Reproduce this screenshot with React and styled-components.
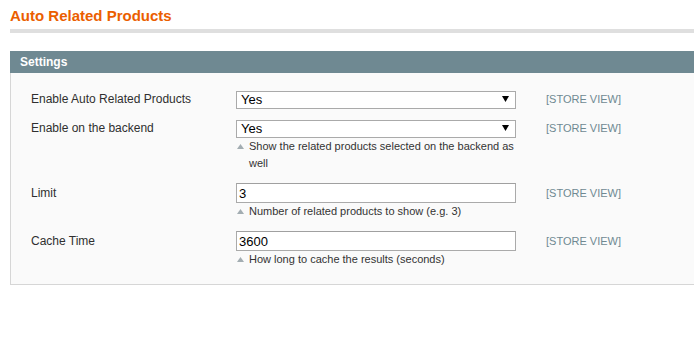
import React from "react";
import styled, { createGlobalStyle } from "styled-components";

const GlobalStyle = createGlobalStyle`
  html, body {
    margin: 0;
    background: #ffffff;
  }
  body {
    font-family: "Liberation Sans", Arial, Helvetica, sans-serif;
    color: #2f2f2f;
  }
`;

const Page = styled.div`
  padding: 7px 0 0 10px;
`;

const PageTitle = styled.h3`
  margin: 0;
  padding-bottom: 4px;
  border-bottom: 4px solid #dfdfdf;
  color: #eb5e00;
  font-size: 15px;
  line-height: 18px;
  font-weight: bold;
`;

const Section = styled.section`
  margin-top: 18px;
`;

const SectionHeader = styled.div`
  height: 22px;
  padding-left: 10px;
  background: #6f8992;
  color: #ffffff;
  font-size: 12px;
  font-weight: bold;
  line-height: 22px;
`;

const SectionBody = styled.div`
  background: #fafafa;
  border: 1px solid #d6d6d6;
  border-top: none;
  border-right: none;
  padding: 17px 0 16px 20px;
`;

const Row = styled.div`
  display: flex;
  align-items: flex-start;
  margin-bottom: 11px;

  &:last-child {
    margin-bottom: 0;
  }
`;

const Label = styled.div`
  flex: none;
  width: 205px;
  font-size: 12px;
  line-height: ${props => props.$h}px;
`;

const Value = styled.div`
  flex: none;
  width: 280px;
`;

const Scope = styled.div`
  margin-left: 30px;
  font-size: 11px;
  color: #6f8992;
  text-transform: uppercase;
  line-height: ${props => props.$h}px;
`;

const SelectWrap = styled.div`
  position: relative;
  width: 280px;
  height: 18px;
`;

const Select = styled.select`
  appearance: none;
  box-sizing: border-box;
  width: 100%;
  height: 18px;
  margin: 0;
  padding: 0 0 0 4px;
  border: 1px solid #aaaaaa;
  border-radius: 0;
  background: #ffffff;
  color: #000000;
  font-family: "Liberation Sans", Arial, sans-serif;
  font-size: 13px;
  line-height: 16px;
  outline: none;
`;

const SelectArrow = styled.svg`
  position: absolute;
  right: 7px;
  top: 6px;
  pointer-events: none;
`;

const TextInput = styled.input`
  box-sizing: border-box;
  display: block;
  width: 280px;
  height: 20px;
  margin: 0;
  padding: 0 2px;
  border: 1px solid #aaaaaa;
  border-top-color: #a0a0a0;
  background: #ffffff;
  color: #000000;
  font-family: "Liberation Sans", Arial, sans-serif;
  font-size: 13px;
  outline: none;
`;

const Note = styled.div`
  display: flex;
  align-items: flex-start;
  margin-top: ${props => props.$top}px;
  font-size: 11px;
  line-height: 17px;
  color: #333333;
`;

const NoteIcon = styled.svg`
  flex: none;
  margin: 6px 5px 0 1px;
`;

function Dropdown({ value }) {
  return (
    <SelectWrap>
      <Select defaultValue={value}>
        <option value="Yes">Yes</option>
        <option value="No">No</option>
      </Select>
      <SelectArrow width="7" height="6" viewBox="0 0 7 6">
        <polygon points="0,0 7,0 3.5,6" fill="#000" />
      </SelectArrow>
    </SelectWrap>
  );
}

function Hint({ top, children }) {
  return (
    <Note $top={top}>
      <NoteIcon width="7" height="5" viewBox="0 0 7 5">
        <polygon points="3.5,0 7,5 0,5" fill="#a3adb2" />
      </NoteIcon>
      <span>{children}</span>
    </Note>
  );
}

const fields = [
  { label: "Enable Auto Related Products", type: "select", value: "Yes" },
  {
    label: "Enable on the backend",
    type: "select",
    value: "Yes",
    note: "Show the related products selected on the backend as well"
  },
  {
    label: "Limit",
    type: "text",
    value: "3",
    note: "Number of related products to show (e.g. 3)"
  },
  {
    label: "Cache Time",
    type: "text",
    value: "3600",
    note: "How long to cache the results (seconds)"
  }
];

export default function App() {
  return (
    <Page>
      <GlobalStyle />
      <PageTitle>Auto Related Products</PageTitle>
      <Section>
        <SectionHeader>Settings</SectionHeader>
        <SectionBody>
          {fields.map(field => {
            const isSelect = field.type === "select";
            const h = isSelect ? 18 : 20;
            return (
              <Row key={field.label}>
                <Label $h={h}>{field.label}</Label>
                <Value>
                  {isSelect ? (
                    <Dropdown value={field.value} />
                  ) : (
                    <TextInput type="text" defaultValue={field.value} />
                  )}
                  {field.note && (
                    <Hint top={isSelect ? 1 : 0}>{field.note}</Hint>
                  )}
                </Value>
                <Scope $h={h}>[Store View]</Scope>
              </Row>
            );
          })}
        </SectionBody>
      </Section>
    </Page>
  );
}
